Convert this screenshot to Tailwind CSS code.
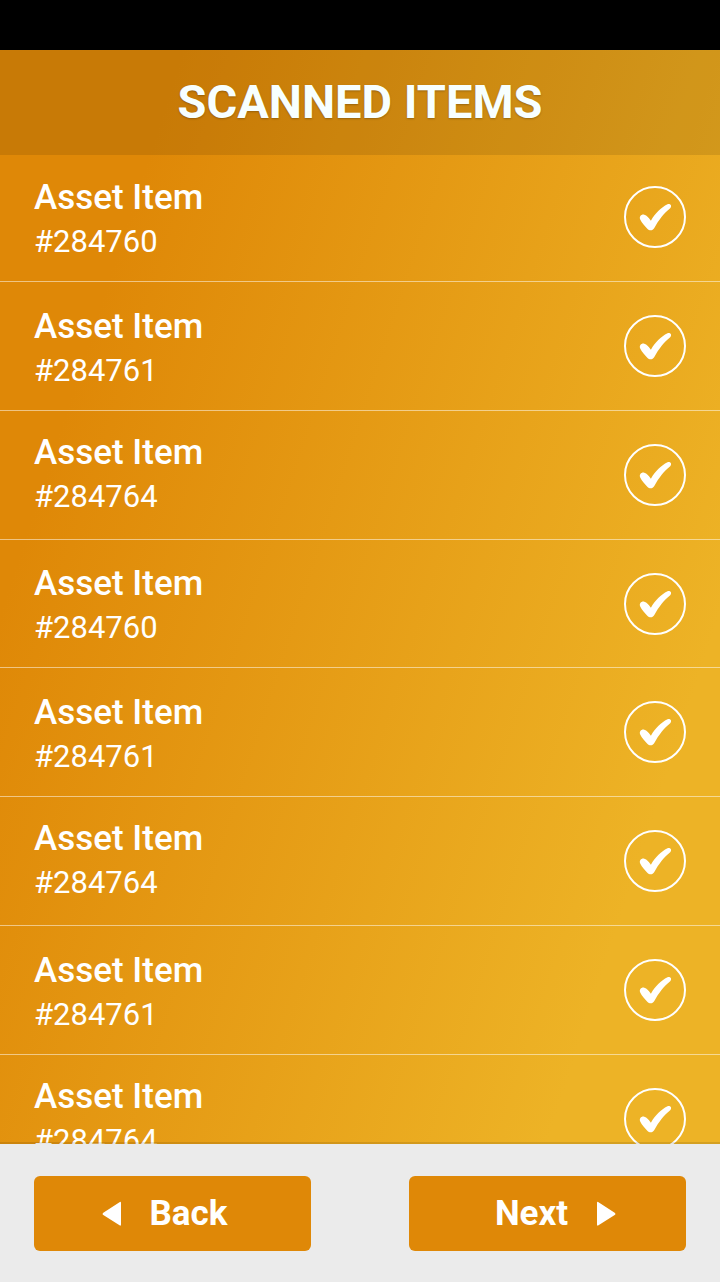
<!DOCTYPE html>
<html lang="en">
<head>
<meta charset="utf-8">
<meta name="viewport" content="width=device-width, initial-scale=1">
<title>Scanned Items</title>
<script src="https://cdn.jsdelivr.net/npm/@tailwindcss/browser@4"></script>
</head>
<body class="flex h-screen flex-col overflow-hidden bg-black pt-[50px] font-['Roboto',sans-serif] text-white">
<div class="flex min-h-0 flex-1 flex-col overflow-hidden bg-[linear-gradient(108deg,#df8807_17%,#edb326_84%)]">
  <header class="flex h-[105px] shrink-0 items-center justify-center bg-black/10 pb-0.5">
    <h1 class="text-[47px] leading-none font-bold text-[#f7ffff] [text-shadow:0_1px_2px_rgba(0,0,0,0.25)]">SCANNED ITEMS</h1>
  </header>
  <ul id="items" class="-mt-0.5 min-h-0 flex-1 overflow-y-auto [scrollbar-width:none]"></ul>
</div>
<footer class="relative grid shrink-0 grid-cols-2 gap-[98px] bg-[#ebebeb] px-[34px] pt-8 pb-[31px] shadow-[0_-2px_0_rgba(0,0,0,0.1)]">
  <button type="button" class="flex h-[75px] items-center justify-center gap-7 rounded-md bg-[#df8807] pr-4 text-[35px] leading-none font-bold">
    <svg class="h-[26px] w-5" viewBox="0 0 20 26" fill="currentColor" aria-hidden="true"><path d="M17.500 1.200Q19 .2 19 2V23.500Q19 25.300 17.500 24.300L1.300 14Q-.2 13 1.300 11.700Z"/></svg>
    Back
  </button>
  <button type="button" class="flex h-[75px] items-center justify-center gap-7 rounded-md bg-[#df8807] pl-4 text-[35px] leading-none font-bold">
    Next
    <svg class="h-[26px] w-5" viewBox="0 0 20 26" fill="currentColor" aria-hidden="true"><path d="M2.500 1.200Q1 .2 1 2V23.500Q1 25.300 2.500 24.300L18.700 14Q20.200 13 18.700 11.700Z"/></svg>
  </button>
</footer>
<template id="row">
  <li class="flex h-[129px] items-center justify-between border-b border-white/50 px-[34px]">
    <label class="flex flex-1 flex-col gap-[9px] pt-1">
      <span class="text-[35px] leading-[35px] font-medium">Asset Item</span>
      <span class="num text-[31px] leading-[35px]"></span>
    </label>
    <span class="relative size-[62px] shrink-0">
      <input type="checkbox" checked class="peer block size-full appearance-none rounded-full border-2 border-white">
      <svg class="pointer-events-none absolute inset-0 hidden size-full peer-checked:block" viewBox="0 0 62 62" fill="currentColor" aria-hidden="true"><path d="M16.200 33.500C14.800 30.500 17.500 28 20.300 28.700C22.800 29.300 25 32 26.900 34.800C31 27.500 37 21.500 43.500 18.300C46.500 17.300 48.300 20 46.200 22.300C40 27 34.500 34.500 30.300 42C28.500 45 25.500 45 23.300 42.700C20.600 39.900 17.800 37 16.200 33.500Z"/></svg>
    </span>
  </li>
</template>
<script>
const numbers = ['284760','284761','284764','284760','284761','284764','284761','284764'];
const list = document.getElementById('items');
numbers.forEach((n, i) => {
  const row = document.getElementById('row').content.cloneNode(true);
  row.querySelector('.num').textContent = '#' + n;
  row.querySelector('input').id = 'item' + i;
  row.querySelector('label').htmlFor = 'item' + i;
  if (n === '284764') row.querySelector('label').classList.replace('pt-1', 'pb-0.5');
  if (i === 3) row.querySelector('li').classList.replace('h-[129px]', 'h-[128px]');
  list.append(row);
});
</script>
</body>
</html>
